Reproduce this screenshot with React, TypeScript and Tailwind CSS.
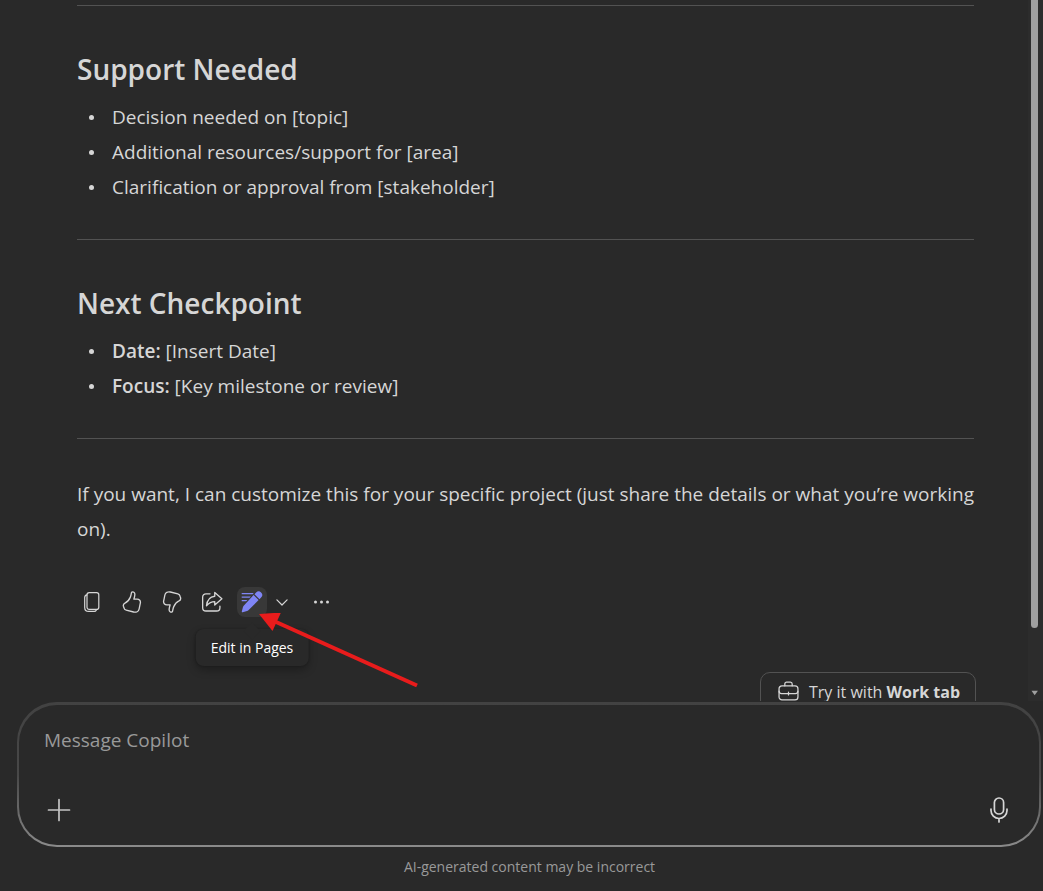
import type { ReactNode } from "react";

function Icon({ children, className = "size-5" }: { children: ReactNode; className?: string }) {
  return (
    <svg
      viewBox="0 0 20 20"
      className={className}
      fill="none"
      stroke="currentColor"
      strokeWidth="1.2"
      strokeLinecap="round"
      strokeLinejoin="round"
      aria-hidden="true"
    >
      {children}
    </svg>
  );
}

const ThumbPath = () => (
  <path d="M10.2 .9c.9-.5 2.3 .4 2.4 1.8.1 1.6-.5 3.3-.9 4.700h2.900c2 0 3.400 1.400 3 3.500l-1.100 5.300c-.5 2.300-2.700 3.400-5 2.900l-6.800-1.700c-1.200-.3-1.800-1-2-2.100l-.5-1.500c-.3-1.300.3-2.300 1.400-2.800 2.400-1 3.700-2.700 4.800-5.200.7-1.600.8-3.100 1.100-4.200.1-.4.3-.6.7-.7Z" />
);

function ActionButton({ label, children }: { label: string; children: ReactNode }) {
  return (
    <button type="button" aria-label={label} className="flex size-[30px] items-center justify-center rounded-md">
      {children}
    </button>
  );
}

function Divider() {
  return <hr className="border-0 border-t border-[#525252]" />;
}

function Section({ title, children }: { title: string; children: ReactNode }) {
  return (
    <section className="pt-[43px] pb-[34px]">
      <h2 className="text-[28px] leading-10 font-semibold">{title}</h2>
      <ul className="mt-[11px] list-none">{children}</ul>
    </section>
  );
}

function Item({ children }: { children: ReactNode }) {
  return (
    <li className="flex items-center gap-4 pl-3">
      <span className="size-[5px] rounded-full bg-[#d6d6d6]" />
      <span className="pl-[2px]">{children}</span>
    </li>
  );
}

function Actions() {
  return (
    <div className="mt-10 flex items-center gap-[10px]">
      <ActionButton label="Copy">
        <Icon>
          <rect x="5" y="0.6" width="11.8" height="16.8" rx="2.2" />
          <path d="M5 2.8c-1.4.2-2.3 1.2-2.3 2.6v10c0 2.4 1.6 4 4 4h5.5c1 0 1.8-.6 2.2-1.5" />
        </Icon>
      </ActionButton>
      <ActionButton label="Like">
        <Icon className="size-[22px]">
          <ThumbPath />
        </Icon>
      </ActionButton>
      <ActionButton label="Dislike">
        <Icon className="size-[22px] rotate-180">
          <ThumbPath />
        </Icon>
      </ActionButton>
      <ActionButton label="Share">
        <Icon className="size-[22px]">
          <path d="M8.2 2.6H4.5a3 3 0 0 0-3 3v9.6a3 3 0 0 0 3 3h9.7a3 3 0 0 0 3-3v-1.4" />
          <path d="M12.5 1.3 19 7l-6.5 5.8V9.7c-3.2 0-5.2 1.1-7.5 3.8.5-4.9 3-8.2 7.5-8.7Z" />
        </Icon>
      </ActionButton>
      <div className="flex items-center">
        <div className="relative">
          <button
            type="button"
            aria-label="Edit in Pages"
            aria-describedby="pages-tip"
            className="flex size-[30px] items-center justify-center rounded-lg bg-[#383838] text-[#7f85f5]"
          >
            <svg viewBox="0 0 22 22" className="size-[22px]" fill="currentColor" aria-hidden="true">
              <path d="M.7 2h12l-1 1.2H.7ZM.7 5.4h9.2L8.6 6.7H.7ZM.7 8.9h5.7l-1.3 1.3H.7Z" />
              <path d="m12.6 4.1 5 5L7.4 19.3c-.4.4-.9.7-1.4.8l-4.3 1.2c-.6.2-1-.3-.9-.8l1.1-4.3c.2-.6.4-1 .8-1.4Z" />
              <path d="m13.5 3.2 1.6-1.6a3.5 3.5 0 0 1 5 0 3.5 3.5 0 0 1 0 5l-1.6 1.6Z" />
            </svg>
          </button>
          <div
            id="pages-tip"
            role="tooltip"
            className="absolute top-full left-1/2 mt-3 -translate-x-1/2 rounded-lg bg-[#292929] px-[15px] pt-[9px] pb-2 text-sm leading-5 whitespace-nowrap text-white shadow-[0_4px_9px_rgba(0,0,0,0.28),0_0_2px_rgba(0,0,0,0.2)]"
          >
            <span className="absolute -top-1 left-1/2 size-3 -translate-x-1/2 rotate-45 bg-[#292929]" />
            <span className="relative">Edit in Pages</span>
          </div>
          <svg
            viewBox="0 0 160 76"
            className="pointer-events-none absolute top-[26px] left-[22px] z-10 h-[76px] w-[160px]"
            aria-hidden="true"
          >
            <path d="M16 8.5 158 72.5" stroke="#e81c1c" strokeWidth="4" fill="none" />
            <path d="M0 1 22-.5 13.5 18Z" fill="#e81c1c" />
          </svg>
        </div>
        <ActionButton label="More edit options">
          <Icon className="size-3">
            <path d="m1.500 6.500 8.500 8.500 8.500-8.500" strokeWidth="2" />
          </Icon>
        </ActionButton>
      </div>
      <ActionButton label="More options">
        <svg viewBox="0 0 20 20" className="size-5" fill="currentColor" aria-hidden="true">
          <circle cx="3.500" cy="10" r="1.500" />
          <circle cx="9.500" cy="10" r="1.500" />
          <circle cx="15.500" cy="10" r="1.500" />
        </svg>
      </ActionButton>
    </div>
  );
}

function Scrollbar() {
  return (
    <div className="flex w-[15px] shrink-0 flex-col items-start bg-[#2c2c2c] pl-[3px]" aria-hidden="true">
      <div className="h-[628px] w-[7px] rounded-b-full bg-[#9f9f9f]" />
      <div className="mt-auto pb-[5px]">
        <svg viewBox="0 0 8 6" className="h-[6px] w-2" fill="#9f9f9f">
          <path d="M.5.7h6.400L3.700 5.300Z" />
        </svg>
      </div>
    </div>
  );
}

function Composer() {
  return (
    <form
      className="mr-[2px] ml-[17px] rounded-[40px] bg-linear-to-b from-[#424242] via-[#484848] to-[#8b8b8b] px-[2px] pt-[3px] pb-[2px]"
      onSubmit={(e) => e.preventDefault()}
    >
      <div className="rounded-[38px] bg-[#292929] px-[25px] pt-[17px] pb-[19px]">
        <input
          type="text"
          aria-label="Message Copilot"
          placeholder="Message Copilot"
          className="block h-9 w-full bg-transparent text-[19px] outline-none placeholder:text-[#999999]"
        />
        <div className="-mx-px mt-9 flex items-center justify-between">
          <button type="button" aria-label="Add content" className="flex size-8 items-center justify-center">
            <svg viewBox="0 0 24 24" className="size-6" fill="none" stroke="#c4c4c4" strokeWidth="1.700" strokeLinecap="round" aria-hidden="true">
              <path d="M1.500 12h21M12 1.500v21" />
            </svg>
          </button>
          <button type="button" aria-label="Start voice input" className="flex size-8 items-center justify-center">
            <svg viewBox="0 0 24 26" className="h-[26px] w-6" fill="none" stroke="#d6d6d6" strokeWidth="1.700" strokeLinecap="round" aria-hidden="true">
              <rect x="7.400" y="1" width="9.200" height="16" rx="4.600" />
              <path d="M4 12v1.500a8 8 0 0 0 16 0V12M12 21.500V25" />
            </svg>
          </button>
        </div>
      </div>
    </form>
  );
}

export default function App() {
  return (
    <div className="flex h-screen flex-col bg-[#292929] font-['Open_Sans','Noto_Sans',sans-serif] text-[#d6d6d6]">
      <main className="flex min-h-0 flex-1 overflow-hidden">
        <article className="min-w-0 flex-1 pt-[5px] pr-[54px] pl-[77px] text-[19px] leading-[35px]">
          <Divider />
          <Section title="Support Needed">
            <Item>Decision needed on [topic]</Item>
            <Item>Additional resources/support for [area]</Item>
            <Item>Clarification or approval from [stakeholder]</Item>
          </Section>
          <Divider />
          <Section title="Next Checkpoint">
            <Item>
              <strong className="font-semibold">Date:</strong> [Insert Date]
            </Item>
            <Item>
              <strong className="font-semibold">Focus:</strong> [Key milestone or review]
            </Item>
          </Section>
          <Divider />
          <p className="mt-[38px] -mr-4">
            If you want, I can customize this for your specific project (just share the details or what you’re working
            on).
          </p>
          <Actions />
          <div className="mt-[55px] flex justify-end">
            <button
              type="button"
              className="-mr-[2px] flex h-11 items-center gap-[10px] rounded-[10px] border border-[#525252] pr-[15px] pl-[17px] text-base leading-6"
            >
              <Icon className="mb-[6px] size-[21px]">
                <rect x="1" y="4.600" width="18" height="13.400" rx="2.800" />
                <path d="M6.500 4.600V2.800C6.500 1.800 7.200 1 8.200 1h3.600c1 0 1.700.8 1.700 1.800v1.800M1 9.600c0 1.500 1 2.400 2.400 2.400h13.200c1.400 0 2.400-.9 2.400-2.400M10 10.700v2.600" />
              </Icon>
              <span className="mb-1">
                Try it with <strong className="font-bold">Work tab</strong>
              </span>
            </button>
          </div>
        </article>
        <Scrollbar />
      </main>
      <div className="pt-[1px]">
        <Composer />
        <p className="pt-2 pb-3 pl-4 text-center text-sm leading-6 text-[#999999]">AI-generated content may be incorrect</p>
      </div>
    </div>
  );
}
